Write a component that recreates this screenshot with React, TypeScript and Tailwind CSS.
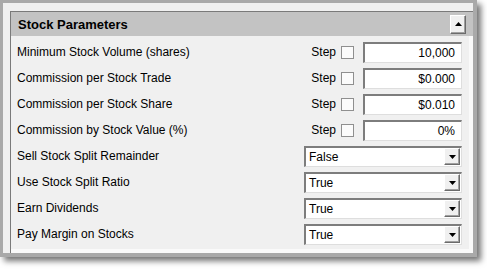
const stepRows = [
  { label: 'Minimum Stock Volume (shares)', value: '10,000' },
  { label: 'Commission per Stock Trade', value: '$0.000' },
  { label: 'Commission per Stock Share', value: '$0.010' },
  { label: 'Commission by Stock Value (%)', value: '0%' },
];

const selectRows = [
  { label: 'Sell Stock Split Remainder', value: 'False' },
  { label: 'Use Stock Split Ratio', value: 'True' },
  { label: 'Earn Dividends', value: 'True' },
  { label: 'Pay Margin on Stocks', value: 'True' },
];

// classic raised button edge
const raised =
  'border border-t-white border-l-white border-r-[#6b6b6b] border-b-[#6b6b6b] shadow-[inset_-1px_-1px_0_#a0a0a0] bg-[#f0f0f0]';

const sunken =
  'border-t-2 border-l-2 border-r border-b border-t-[#7d7d7d] border-l-[#7d7d7d] border-r-[#dedede] border-b-[#dedede] bg-white';

const App = () => {
  return (
    <div
      className="w-[487px] h-[269px] bg-white text-black text-[12px] leading-none"
      style={{ fontFamily: '"Liberation Sans", Arial, sans-serif' }}
    >
      <div className="w-[477px] h-[257px] bg-[#f0f0f0] border-l-[3px] border-t-[3px] border-r-4 border-b-4 border-[#a9a9a9] pl-[7px] pt-[8px] shadow-[4px_4px_6px_rgba(0,0,0,0.55)]">
        <div className="w-[463px] h-[242px] border-l border-t border-[#7a7a7a] flex flex-col">
          {/* Titel */}
          <div className="h-[24px] bg-[#c3c3c3] flex items-center justify-between pl-[7px] pr-[7px]">
            <span className="text-[13px] font-bold">Stock Parameters</span>
            <div className={`w-[16px] h-[19px] flex items-center justify-center ${raised}`}>
              <svg width="7" height="4" viewBox="0 0 7 4">
                <polygon points="0,4 7,4 3.5,0" fill="#000" />
              </svg>
            </div>
          </div>

          <div className="flex-1 border-r-4 border-b-4 border-[#fafafa] pl-[6px] pr-[7px] pt-[3px]">
            {stepRows.map((row) => (
              <div key={row.label} className="h-[26px] flex items-center justify-between">
                <span>{row.label}</span>
                <div className="flex items-center">
                  <span>Step</span>
                  <span className="ml-[5px] w-[13px] h-[13px] border border-[#8f8f8f] bg-[#fbfbfb]" />
                  <div className={`ml-[9px] w-[99px] h-[21px] flex items-center justify-end pr-[6px] ${sunken}`}>
                    {row.value}
                  </div>
                </div>
              </div>
            ))}
            {selectRows.map((row) => (
              <div key={row.label} className="h-[26px] flex items-center justify-between">
                <span>{row.label}</span>
                <div className={`w-[158px] h-[21px] flex items-center justify-between pl-[3px] pr-[1px] ${sunken}`}>
                  <span>{row.value}</span>
                  <div className={`w-[16px] h-[17px] flex items-center justify-center ${raised}`}>
                    <svg width="7" height="4" viewBox="0 0 7 4">
                      <polygon points="0,0 7,0 3.5,4" fill="#000" />
                    </svg>
                  </div>
                </div>
              </div>
            ))}
          </div>
        </div>
      </div>
    </div>
  );
};

export default App;
